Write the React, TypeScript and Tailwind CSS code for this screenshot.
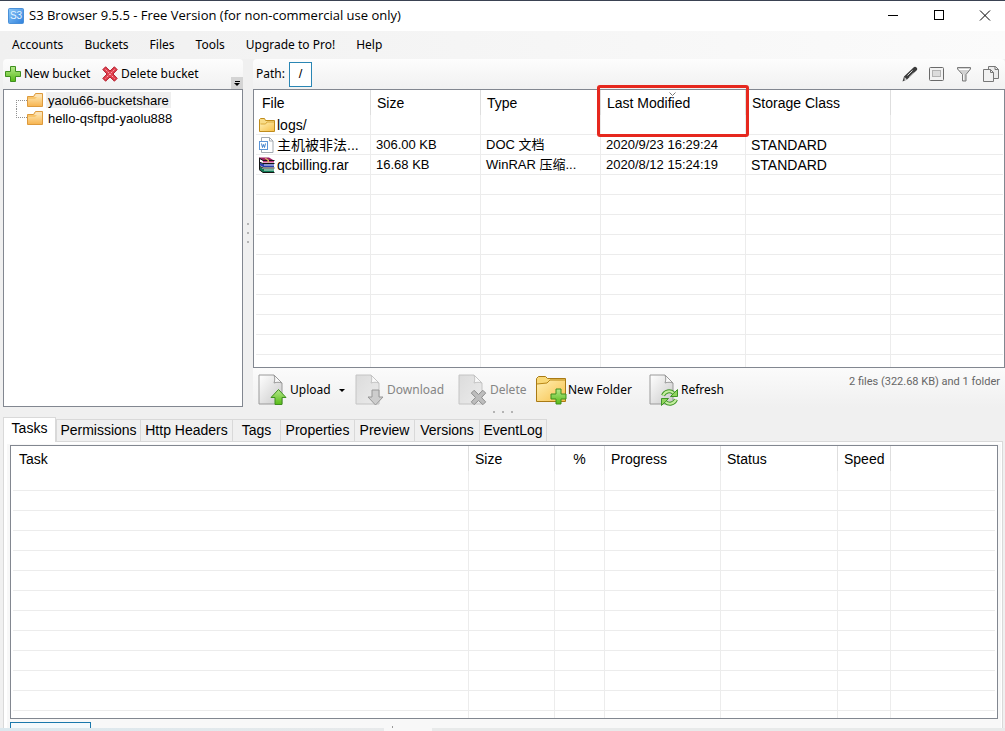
import { useState, type ReactNode } from "react";

const MENUS = ["Accounts", "Buckets", "Files", "Tools", "Upgrade to Pro!", "Help"];

const BUCKETS = ["yaolu66-bucketshare", "hello-qsftpd-yaolu888"];

const TABS = [
  { label: "Tasks", width: "w-[53px]" },
  { label: "Permissions", width: "w-[85px]" },
  { label: "Http Headers", width: "w-[93px]" },
  { label: "Tags", width: "w-[49px]" },
  { label: "Properties", width: "w-[75px]" },
  { label: "Preview", width: "w-[61px]" },
  { label: "Versions", width: "w-[66px]" },
  { label: "EventLog", width: "w-[68px]" },
];

type Column = { label: string; width: string; sorted?: boolean; center?: boolean };

const FILE_COLUMNS: Column[] = [
  { label: "File", width: "w-[115px]" },
  { label: "Size", width: "w-[110px]" },
  { label: "Type", width: "w-[120px]" },
  { label: "Last Modified", width: "w-[145px]", sorted: true },
  { label: "Storage Class", width: "w-[145px]" },
];

const TASK_COLUMNS: Column[] = [
  { label: "Task", width: "w-[456px]" },
  { label: "Size", width: "w-[86px]" },
  { label: "%", width: "w-[50px]", center: true },
  { label: "Progress", width: "w-[116px]" },
  { label: "Status", width: "w-[117px]" },
  { label: "Speed", width: "w-[53px]" },
];

const ROW_COUNT = 12;

/* ---------- icons ---------- */

function AppIcon() {
  return (
    <svg width="16" height="16" viewBox="0 0 16 16" aria-hidden="true">
      <defs>
        <linearGradient id="app" x1="0" y1="0" x2="1" y2="1">
          <stop offset="0" stopColor="#8cc8f8" />
          <stop offset="1" stopColor="#2f80dc" />
        </linearGradient>
      </defs>
      <rect x="0.5" y="0.5" width="15" height="15" rx="1" fill="url(#app)" stroke="#4a90d8" />
      <text x="8" y="11" textAnchor="middle" fontSize="10" fill="#e6f4ff" fontFamily="Liberation Sans, sans-serif">
        S3
      </text>
    </svg>
  );
}

function PlusShape() {
  return (
    <path
      d="M5.5 0.5h5v5h5v5h-5v5h-5v-5h-5v-5h5z"
      fill="url(#green)"
      stroke="#3f8f1f"
      strokeLinejoin="round"
    />
  );
}

function PlusIcon() {
  return (
    <svg width="16" height="16" viewBox="0 0 16 16" aria-hidden="true">
      <PlusShape />
    </svg>
  );
}

const CROSS_PATH =
  "M3.6 0.8 8 5l4.4-4.2 2.8 2.8L11 8l4.2 4.4-2.8 2.8L8 11l-4.4 4.2-2.8-2.8L5 8 0.8 3.6z";

function CrossIcon() {
  return (
    <svg width="16" height="16" viewBox="0 0 16 16" aria-hidden="true">
      <path d={CROSS_PATH} fill="#e0414f" stroke="#b3202f" strokeLinejoin="round" />
      <path d="M3.5 3.5l9 9M12.5 3.5l-9 9" stroke="#f8a3ab" strokeWidth="1" strokeDasharray="2 1" />
    </svg>
  );
}

function BucketIcon() {
  return (
    <svg width="16" height="14" viewBox="0 0 16 14" aria-hidden="true">
      <path d="M0.5 3.5h6l2-3h7v13h-15z" fill="#f8c56c" stroke="#dd9a3c" />
      <path d="M9 1h6v3H7z" fill="#fbe2b4" />
      <path d="M1 6h7l2-2h5v9H1z" fill="url(#bucket)" />
    </svg>
  );
}

function FolderIcon() {
  return (
    <svg width="16" height="14" viewBox="0 0 16 14" aria-hidden="true">
      <path d="M0.5 13.5v-12l1-1h4l1 2h9v11z" fill="#f9dc86" stroke="#c08c1c" />
      <path d="M1 13V6h5l2-2h7v9z" fill="url(#folder)" />
      <path d="M1.5 6h5l1.5-2h7" fill="none" stroke="#d9a93a" />
    </svg>
  );
}

function DocIcon() {
  return (
    <svg width="16" height="16" viewBox="0 0 16 16" aria-hidden="true">
      <path d="M2.5 0.5h8l3.5 3.5v11.5h-11.5z" fill="#fff" stroke="#a3a9b0" />
      <path d="M10.5 0.5v3.5h3.5" fill="none" stroke="#a3a9b0" />
      <rect x="0.5" y="4.5" width="8" height="8" fill="#fff" stroke="#5b95d8" />
      <path d="M2.5 6.5l1 4 1-3 1 3 1-4" fill="none" stroke="#3d80cc" />
    </svg>
  );
}

function RarIcon() {
  return (
    <svg width="16" height="16" viewBox="0 0 16 16" aria-hidden="true">
      <path d="M0 0.5h10l5 3H4L0 1.5z" fill="#9c1f62" />
      <path d="M4 3h11v2.5H4z" fill="#c23a80" />
      <path d="M0 5l4 2h11v3H4L0 8z" fill="#2b3fae" />
      <path d="M5 7.5h10v1H5z" fill="#e4e8fb" />
      <path d="M0 9l4 3h11v3.5H4L0 12z" fill="#0f7a54" />
      <path d="M5 12.5h10v1H5z" fill="#dff5ea" />
      <path d="M0 1l4 2.5h11.5M0 5l4 1.5h11.5M0 9l4 2h11.5M0 12.5l4 3h11.5" fill="none" stroke="#141414" />
      <path d="M0.5 1v11.5" stroke="#141414" />
      <path d="M7 1l3 2v2.5H8.5V3.5L5.5 1z" fill="#e0b860" />
    </svg>
  );
}

function Page({ dim = false }: { dim?: boolean }) {
  return (
    <>
      <path
        d="M1 1h15l8 8v21H1z"
        fill={dim ? "url(#pageDim)" : "url(#page)"}
        stroke={dim ? "#c4c4c4" : "#9a9a9a"}
      />
      <path d="M16 1c1 3 1 5 0 8 3-1 5-1 8 0z" fill="#fafafa" stroke={dim ? "#c4c4c4" : "#9a9a9a"} />
    </>
  );
}

function UploadIcon() {
  return (
    <svg width="32" height="32" viewBox="0 0 32 32" aria-hidden="true">
      <Page />
      <path d="M20.5 15.5l7.5 8h-4v7h-7v-7h-4z" fill="url(#green)" stroke="#3f8f1f" strokeLinejoin="round" />
    </svg>
  );
}

function DownloadIcon() {
  return (
    <svg width="32" height="32" viewBox="0 0 32 32" aria-hidden="true">
      <Page dim />
      <path d="M20.5 31l7.5-8h-4v-7h-7v7h-4z" fill="#cdcdcd" stroke="#989898" strokeLinejoin="round" />
    </svg>
  );
}

function DeleteIcon() {
  return (
    <svg width="32" height="32" viewBox="0 0 32 32" aria-hidden="true">
      <Page dim />
      <g transform="translate(12.5 15.5)">
        <path d={CROSS_PATH} fill="#bdbdbd" stroke="#8f8f8f" strokeLinejoin="round" />
      </g>
    </svg>
  );
}

function NewFolderIcon() {
  return (
    <svg width="32" height="32" viewBox="0 0 32 32" aria-hidden="true">
      <path d="M0.5 27.5v-23l2-2h7l2 2h18v23z" fill="#f9d978" stroke="#a97a14" strokeLinejoin="round" />
      <path d="M1 27V10l10-1 3-3h15v21z" fill="url(#folder)" />
      <path d="M1 10l10-1 3-3h15" fill="none" stroke="#b98716" />
      <g transform="translate(14.5 14.5)">
        <PlusShape />
      </g>
    </svg>
  );
}

function RefreshIcon() {
  return (
    <svg width="32" height="32" viewBox="0 0 32 32" aria-hidden="true">
      <Page />
      <g fill="none" stroke="#3f9428" strokeWidth="4">
        <path d="M14 21.5c2-4.5 7-5.5 10.5-2.5" />
        <path d="M27 25.5c-2 4.5-7 5.5-10.5 2.5" />
      </g>
      <path d="M28.5 15.5v7h-7zM12.5 31.5v-7h7z" fill="#8fd45c" stroke="#3f9428" />
      <g fill="none" stroke="#c4ee9e" strokeWidth="2">
        <path d="M14 21.5c2-4.5 7-5.5 10.5-2.5" />
        <path d="M27 25.5c-2 4.5-7 5.5-10.5 2.5" />
      </g>
    </svg>
  );
}

function PencilIcon() {
  return (
    <svg width="16" height="16" viewBox="0 0 16 16" aria-hidden="true">
      <path d="M0.5 15.5l1.500-5 9.500-9c1-1 2-1 3 0s1 2 0 3l-9.500 9z" fill="#3c3c3c" />
      <path d="M5.5 9.5l5-5M7.5 11l4.5-4.5" stroke="#d8d8d8" />
      <path d="M2.5 11l2.5 2.5-2.5 1z" fill="#d0d0d0" />
    </svg>
  );
}

function FrameIcon() {
  return (
    <svg width="16" height="16" viewBox="0 0 16 16" aria-hidden="true">
      <rect x="0.5" y="1.5" width="14" height="13" rx="1" fill="#f2f2f2" stroke="#6a6a6a" />
      <rect x="3.5" y="4.5" width="8" height="6" fill="#dcdcdc" stroke="#b2b2b2" />
    </svg>
  );
}

function FunnelIcon() {
  return (
    <svg width="16" height="16" viewBox="0 0 16 16" aria-hidden="true">
      <path d="M1.5 1.5h13v1.5L10 8.5v6.5H6.5V8.5L1.5 3z" fill="#d2d2d2" stroke="#7a7a7a" strokeLinejoin="round" />
      <path d="M3 3.5h10" stroke="#fff" />
      <path d="M7.5 8.5v5.5" stroke="#f6f6f6" />
    </svg>
  );
}

function CopyIcon() {
  return (
    <svg width="16" height="16" viewBox="0 0 16 16" aria-hidden="true">
      <path d="M5.5 0.5h7l3 3v9h-10z" fill="#ececec" stroke="#777" />
      <path d="M12 0.5v3h3.5" fill="none" stroke="#777" />
      <path d="M0.5 3.5h7l3 3v9h-10z" fill="#f1f1f1" stroke="#777" />
      <path d="M7.5 3.5v3h3" fill="none" stroke="#777" />
    </svg>
  );
}

// Gradients shared by the icons above
function IconDefs() {
  return (
    <svg width="0" height="0" className="absolute" aria-hidden="true">
      <defs>
        <linearGradient id="green" x1="0" y1="0" x2="0" y2="1">
          <stop offset="0" stopColor="#b4e88a" />
          <stop offset="1" stopColor="#58bb16" />
        </linearGradient>
        <linearGradient id="bucket" x1="0" y1="0" x2="0" y2="1">
          <stop offset="0" stopColor="#fde0a4" />
          <stop offset="1" stopColor="#f7b552" />
        </linearGradient>
        <linearGradient id="folder" x1="0" y1="0" x2="1" y2="1">
          <stop offset="0" stopColor="#fff0b4" />
          <stop offset="1" stopColor="#f7c14c" />
        </linearGradient>
        <linearGradient id="page" x1="0" y1="0" x2="1" y2="1">
          <stop offset="0" stopColor="#ffffff" />
          <stop offset="1" stopColor="#c9c9c9" />
        </linearGradient>
        <linearGradient id="pageDim" x1="0" y1="0" x2="1" y2="1">
          <stop offset="0" stopColor="#dcdcdc" />
          <stop offset="1" stopColor="#ebebeb" />
        </linearGradient>
      </defs>
    </svg>
  );
}

/* ---------- pieces ---------- */

const FILES: { icon: ReactNode; name: string; size: string; type: string; modified: string; storage: string }[] = [
  { icon: <FolderIcon />, name: "logs/", size: "", type: "", modified: "", storage: "" },
  { icon: <DocIcon />, name: "主机被非法...", size: "306.00 KB", type: "DOC 文档", modified: "2020/9/23 16:29:24", storage: "STANDARD" },
  { icon: <RarIcon />, name: "qcbilling.rar", size: "16.68 KB", type: "WinRAR 压缩...", modified: "2020/8/12 15:24:19", storage: "STANDARD" },
];

function ListView({ columns, rows, tail }: { columns: Column[]; rows: ReactNode[][]; tail: string }) {
  return (
    <table className="w-full table-fixed border-separate border-spacing-0 text-left whitespace-nowrap">
      <thead>
        <tr className="h-[25px] text-[14px] leading-5">
          {columns.map((col) => (
            <th
              key={col.label}
              aria-sort={col.sorted ? "descending" : undefined}
              className={`relative border-r border-[#dedede] py-0 pr-0 font-normal ${col.width} ${
                col.center ? "text-center" : "pl-1.5"
              }`}
            >
              {col.label}
              {col.sorted && (
                <>
                  <svg className="absolute top-0.5 left-[68px]" width="7" height="4" viewBox="0 0 7 4" aria-hidden="true">
                    <path d="M0.5 0.5l3 3 3-3" fill="none" stroke="#777" />
                  </svg>
                  <span className="pointer-events-none absolute -top-[5px] -left-1 h-[52px] w-[152px] rounded-[3px] border-3 border-[#e6281e]" />
                </>
              )}
            </th>
          ))}
          <th className="p-0" />
        </tr>
      </thead>
      <tbody className="text-[13px] leading-[18px]">
        {Array.from({ length: ROW_COUNT }, (_, i) => (
          <tr key={i} className="h-5">
            {columns.map((col, c) => (
              <td key={col.label} className="h-5 overflow-hidden border-r border-b border-[#ececec] p-0 pt-px">
                {rows[i]?.[c]}
              </td>
            ))}
            <td className="border-b border-[#ececec] p-0" />
          </tr>
        ))}
        <tr className={tail}>
          {columns.map((col) => (
            <td key={col.label} className="border-r border-[#ececec] p-0" />
          ))}
          <td className="p-0" />
        </tr>
      </tbody>
    </table>
  );
}

function ToolButton({
  icon,
  label,
  width,
  disabled,
  arrow,
}: {
  icon: ReactNode;
  label: string;
  width: string;
  disabled?: boolean;
  arrow?: boolean;
}) {
  return (
    <button type="button" disabled={disabled} className={`flex items-center disabled:text-[#858585] ${width}`}>
      {icon}
      <span>{label}</span>
      {arrow && <span className="mt-0.5 ml-2 border-x-3 border-t-3 border-x-transparent border-t-black" />}
    </button>
  );
}

function Dots({ vertical }: { vertical?: boolean }) {
  return (
    <div className={`flex items-center justify-center gap-[7px] ${vertical ? "flex-col" : ""}`}>
      <i className="size-0.5 bg-[#b4b4b4]" />
      <i className="size-0.5 bg-[#b4b4b4]" />
      <i className="size-0.5 bg-[#b4b4b4]" />
    </div>
  );
}

/* ---------- window ---------- */

export default function App() {
  const [tab, setTab] = useState("Tasks");
  const [bucket, setBucket] = useState(BUCKETS[0]);

  const fileRows = FILES.map((f) => [
    <span className="flex h-[18px] items-center gap-0.5 pl-[3px] text-[14px]">
      {f.icon}
      {f.name}
    </span>,
    <span className="block h-[18px] pl-[5px]">{f.size}</span>,
    <span className="block h-[18px] pl-[5px]">{f.type}</span>,
    <span className="block h-[18px] pl-[5px]">{f.modified}</span>,
    <span className="block h-[18px] pl-[5px] text-[14px]">{f.storage}</span>,
  ]);

  return (
    <div className="flex min-h-screen flex-col overflow-hidden bg-[#f0f0f0] font-['Liberation_Sans','Noto_Sans_CJK_SC',sans-serif] text-black">
      <IconDefs />

      {/* Title bar */}
      <header className="flex h-[31px] items-center border-t border-[#3a4252] bg-white pr-[14px] pl-2">
        <AppIcon />
        <h1 className="ml-[5px] flex-1 font-['Open_Sans',sans-serif] text-[13px]">
          S3 Browser 9.5.5 - Free Version (for non-commercial use only)
        </h1>
        <div className="flex items-center gap-[34px]">
          <button type="button" aria-label="Minimize" className="w-3">
            <svg width="12" height="12" viewBox="0 0 12 12">
              <path d="M1 5.5h10" stroke="#000" />
            </svg>
          </button>
          <button type="button" aria-label="Maximize" className="w-3">
            <svg width="12" height="12" viewBox="0 0 12 12">
              <rect x="1.5" y="0.5" width="9" height="9" fill="none" stroke="#000" />
            </svg>
          </button>
          <button type="button" aria-label="Close" className="w-3">
            <svg width="12" height="12" viewBox="0 0 12 12">
              <path d="M1 0.5l10 10M11 0.5L1 10.5" stroke="#000" />
            </svg>
          </button>
        </div>
      </header>

      {/* Menu bar */}
      <nav className="flex h-7 items-center gap-[21px] bg-linear-to-r from-[#f0f0f0] to-[#fbfbfb] pl-3 font-['Noto_Sans',sans-serif] text-[12px]">
        {MENUS.map((menu) => (
          <button key={menu} type="button">
            {menu}
          </button>
        ))}
      </nav>

      <main className="flex">
        {/* Buckets */}
        <section className="ml-[3px] flex w-60 flex-col">
          <div className="flex h-[30px] items-center rounded-t-sm bg-linear-to-b from-[#fdfdfd] to-[#f1f1f1] pl-0.5 font-['Noto_Sans',sans-serif] text-[12px]">
            <button type="button" className="flex w-[97px] items-center gap-[3px]">
              <PlusIcon />
              New bucket
            </button>
            <button type="button" className="flex items-center gap-[3px]">
              <CrossIcon />
              Delete bucket
            </button>
            <button
              type="button"
              aria-label="Toolbar options"
              className="ml-auto flex h-3 w-3 flex-col items-center justify-center gap-px self-end bg-[#d4d4d4]"
            >
              <i className="h-px w-[5px] bg-black" />
              <i className="border-x-3 border-t-3 border-x-transparent border-t-black" />
            </button>
          </div>
          <ul className="flex-1 border border-[#828790] bg-white pt-px pl-3 text-[13px]">
            {BUCKETS.map((name, i) => (
              <li key={name} className="flex h-[18px] items-center">
                <span
                  className={`h-[9px] w-[11px] border-l border-dotted border-[#909090] ${
                    i === 0 ? "self-end border-t" : "self-start border-b"
                  }`}
                />
                <BucketIcon />
                <button
                  type="button"
                  onClick={() => setBucket(name)}
                  className={`ml-[3px] h-4 px-0.5 leading-[17px] ${bucket === name ? "bg-[#efefef]" : ""}`}
                >
                  {name}
                </button>
              </li>
            ))}
          </ul>
        </section>

        {/* Splitter */}
        <div className="flex w-2.5 flex-col items-center justify-center">
          <Dots vertical />
        </div>

        {/* Files */}
        <section className="min-w-0 flex-1">
          <div className="flex h-[30px] items-center rounded-t-sm bg-linear-to-b from-[#fdfdfd] to-[#f1f1f1] pr-1.5 pl-[3px]">
            <span className="w-[33px] font-['Noto_Sans',sans-serif] text-[12px]">Path:</span>
            <button type="button" className="h-[25px] w-[23px] border border-[#2a86b4] bg-white text-[13px]">
              /
            </button>
            <div className="ml-auto flex gap-[11px]">
              <button type="button" aria-label="Edit"><PencilIcon /></button>
              <button type="button" aria-label="Preview pane"><FrameIcon /></button>
              <button type="button" aria-label="Filter"><FunnelIcon /></button>
              <button type="button" aria-label="Copy"><CopyIcon /></button>
            </div>
          </div>
          <div className="border border-[#828790] bg-white pr-px pl-0.5">
            <ListView columns={FILE_COLUMNS} rows={fileRows} tail="h-3" />
          </div>
          <div className="flex h-[39px] items-center bg-linear-to-b from-[#fbfbfb] to-[#f0f0f0] px-[5px] pt-1 font-['Noto_Sans',sans-serif] text-[12px]">
            <ToolButton icon={<UploadIcon />} label="Upload" width="w-[97px]" arrow />
            <ToolButton icon={<DownloadIcon />} label="Download" width="w-[103px]" disabled />
            <ToolButton icon={<DeleteIcon />} label="Delete" width="w-[78px]" disabled />
            <ToolButton icon={<NewFolderIcon />} label="New Folder" width="w-[113px]" />
            <ToolButton icon={<RefreshIcon />} label="Refresh" width="w-[80px]" />
            <span className="mt-0.5 ml-auto self-start font-['Roboto',sans-serif] text-[11px] text-[#666]">
              2 files (322.68 KB) and 1 folder
            </span>
          </div>
        </section>
      </main>

      <div className="h-2.5 pt-1">
        <Dots />
      </div>

      {/* Tabs */}
      <div role="tablist" className="flex items-end pl-[3px] text-[14px]">
        {TABS.map(({ label, width }) => (
          <button
            key={label}
            type="button"
            role="tab"
            aria-selected={tab === label}
            onClick={() => setTab(label)}
            className={`-mr-px border border-b-0 border-[#d9d9d9] first:mr-0 ${width} ${
              tab === label ? "z-10 -mb-px h-[25px] bg-white pb-1" : "h-[22px] bg-[#f0f0f0]"
            }`}
          >
            {label}
          </button>
        ))}
      </div>
      <section
        role="tabpanel"
        className="mr-0.5 ml-[3px] flex flex-1 flex-col border border-b-0 border-[#d9d9d9] bg-white pt-0.5 pr-px pl-[3px]"
      >
        <div className="flex-1 bg-[#f8f8f8] px-[3px] pt-px">
          <div className="border border-[#828790] bg-white px-0.5">
            <ListView columns={TASK_COLUMNS} rows={[]} tail="h-[7px]" />
          </div>
          <div className="flex pt-[3px]">
            <button type="button" aria-label="Run next" className="h-1.5 w-[81px] border border-b-0 border-[#1a78ac] bg-[#f4f9fc]" />
            <i className="mt-1 ml-[301px] h-0.5 w-px bg-[#999]" />
          </div>
        </div>
      </section>
      <footer className="flex h-[3px]">
        <div className="w-96 bg-linear-to-r from-[#dbe8ee] to-[#e8eaeb]" />
        <div className="w-12 bg-[#f8f8f8]" />
        <div className="flex-1 bg-[#e8eaea]" />
      </footer>
    </div>
  );
}
